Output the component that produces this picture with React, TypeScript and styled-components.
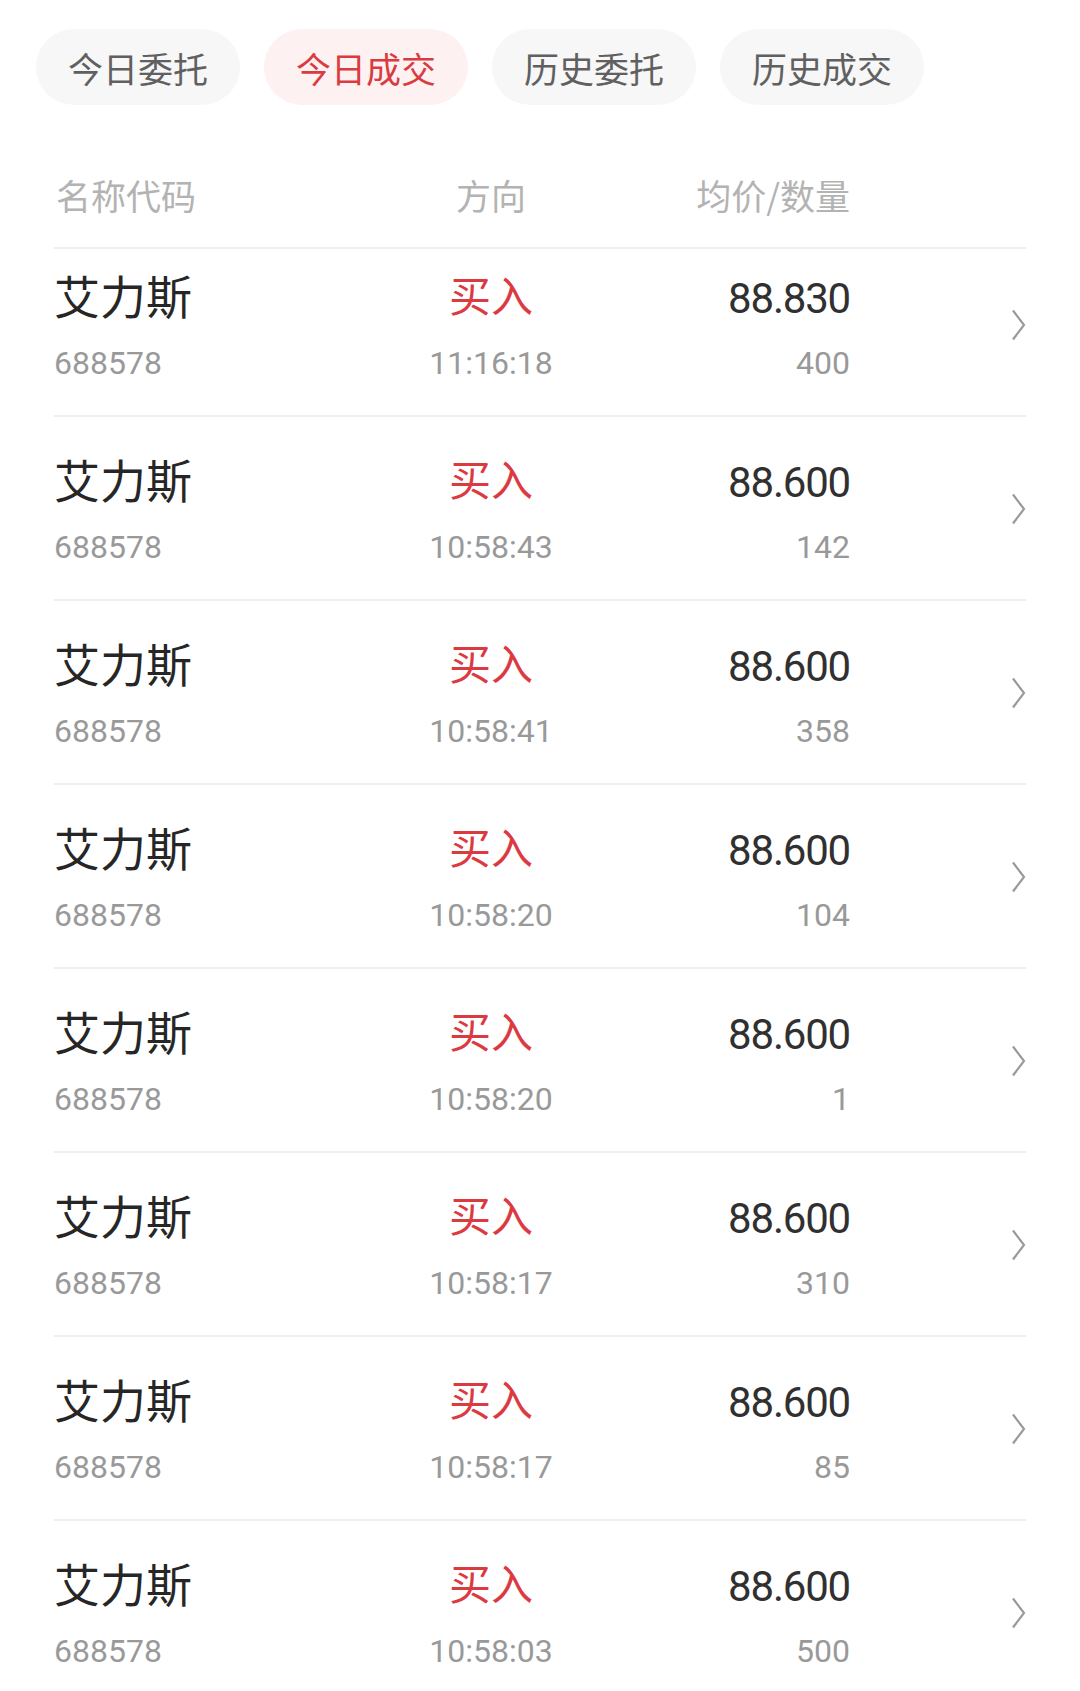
import styled, { createGlobalStyle } from 'styled-components'

const GlobalStyle = createGlobalStyle`
    html, body {
        margin: 0;
        padding: 0;
        background: #ffffff;
    }
    body {
        font-family: "Noto Sans CJK SC", "Noto Sans", sans-serif;
    }
`;

const Page = styled.div`
    width: 1080px;
    min-height: 1691px;
    background: #ffffff;
    overflow: hidden;
`;

const TabBar = styled.div`
    display: flex;
    gap: 24px;
    padding: 29px 36px 0;
`;

const Tab = styled.div<{ $active?: boolean }>`
    width: 204px;
    height: 76px;
    border-radius: 38px;
    display: flex;
    align-items: center;
    justify-content: center;
    font-size: 35px;
    background: ${p => (p.$active ? '#fdf1f1' : '#f7f7f7')};
    color: ${p => (p.$active ? '#dc3a41' : '#606060')};
`;

const Table = styled.div`
    margin: 0 54px;
`;

const Columns = styled.div`
    display: grid;
    grid-template-columns: 310px 254px 232px 1fr;
`;

const HeaderRow = styled(Columns)`
    padding: 72px 0 34px;
    border-bottom: 2px solid #efefef;
    font-size: 35px;
    line-height: 36px;
    color: #b3b3b3;
`;

const HeaderCell = styled.div<{ $align: 'left' | 'center' | 'right' }>`
    text-align: ${p => p.$align};
    padding-left: ${p => (p.$align === 'left' ? '2px' : '0')};
`;

const Row = styled(Columns)`
    padding: 38px 0 36px;
    border-bottom: 2px solid #efefef;
    align-items: center;
    &:first-child {
        padding-top: 22px;
    }
`;

const Cell = styled.div<{ $align: 'left' | 'center' | 'right' }>`
    display: flex;
    flex-direction: column;
    gap: 30px;
    align-items: ${p =>
        p.$align === 'left' ? 'flex-start' : p.$align === 'center' ? 'center' : 'flex-end'};
`;

const Name = styled.div`
    font-size: 46px;
    line-height: 46px;
    color: #262626;
`;

const Side = styled.div`
    font-size: 42px;
    line-height: 46px;
    color: #dc3a41;
`;

const Price = styled.div`
    font-family: Roboto, "Liberation Sans", sans-serif;
    font-size: 42px;
    line-height: 46px;
    padding-top: 5px;
    margin-bottom: -5px;
    letter-spacing: -1.2px;
    color: #303030;
`;

const SubText = styled.div`
    font-family: Roboto, "Liberation Sans", sans-serif;
    font-size: 32px;
    line-height: 32px;
    color: #999999;
`;

const ChevronCell = styled.div`
    display: flex;
    justify-content: flex-end;
    align-items: center;
`;

const Chevron = () => (
    <svg width="15" height="32" viewBox="0 0 15 32">
        <polyline points="2,1.5 13,16 2,30.5" fill="none" stroke="#9a9a9a" strokeWidth="2.2" />
    </svg>
);

const tabs = ['今日委托', '今日成交', '历史委托', '历史成交'];

const trades = [
    { price: '88.830', qty: '400', time: '11:16:18' },
    { price: '88.600', qty: '142', time: '10:58:43' },
    { price: '88.600', qty: '358', time: '10:58:41' },
    { price: '88.600', qty: '104', time: '10:58:20' },
    { price: '88.600', qty: '1', time: '10:58:20' },
    { price: '88.600', qty: '310', time: '10:58:17' },
    { price: '88.600', qty: '85', time: '10:58:17' },
    { price: '88.600', qty: '500', time: '10:58:03' },
];

const App = () => {
    return (
        <Page>
            <GlobalStyle />
            <TabBar>
                {tabs.map((t, i) => (
                    <Tab key={t} $active={i === 1}>{t}</Tab>
                ))}
            </TabBar>
            <Table>
                <HeaderRow>
                    <HeaderCell $align="left">名称代码</HeaderCell>
                    <HeaderCell $align="center">方向</HeaderCell>
                    <HeaderCell $align="right">均价/数量</HeaderCell>
                    <div />
                </HeaderRow>
                <div>
                    {trades.map((r, i) => (
                        <Row key={i}>
                            <Cell $align="left">
                                <Name>艾力斯</Name>
                                <SubText>688578</SubText>
                            </Cell>
                            <Cell $align="center">
                                <Side>买入</Side>
                                <SubText>{r.time}</SubText>
                            </Cell>
                            <Cell $align="right">
                                <Price>{r.price}</Price>
                                <SubText>{r.qty}</SubText>
                            </Cell>
                            <ChevronCell>
                                <Chevron />
                            </ChevronCell>
                        </Row>
                    ))}
                </div>
            </Table>
        </Page>
    )
};

export default App;
